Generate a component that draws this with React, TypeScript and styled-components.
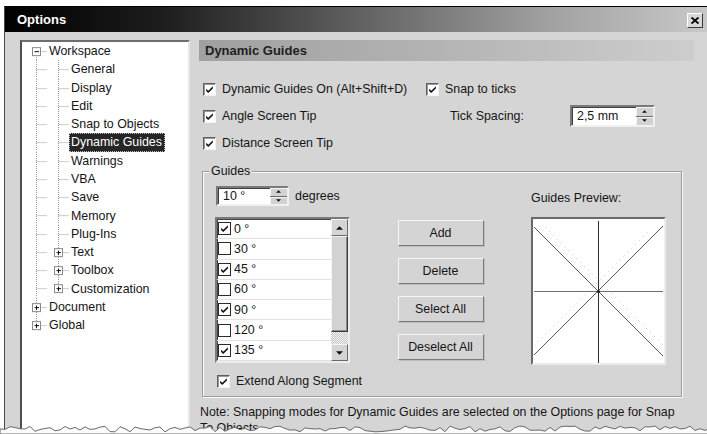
import React from "react";
import styled, { createGlobalStyle } from "styled-components";

const GlobalStyle = createGlobalStyle`
  html, body {
    margin: 0;
    padding: 0;
    background: #fff;
  }
  body {
    font-family: "Liberation Sans", Arial, sans-serif;
    font-size: 12.4px;
    color: #151515;
  }
`;

type VLine = "full" | "top" | "bottom" | "none";
type Expander = "plus" | "minus";

interface TreeNode {
  label: string;
  depth: 0 | 1;
  box?: Expander;
  first?: boolean;
  last?: boolean;
  selected?: boolean;
}

const tree: TreeNode[] = [
  { label: "Workspace", depth: 0, box: "minus", first: true },
  { label: "General", depth: 1 },
  { label: "Display", depth: 1 },
  { label: "Edit", depth: 1 },
  { label: "Snap to Objects", depth: 1 },
  { label: "Dynamic Guides", depth: 1, selected: true },
  { label: "Warnings", depth: 1 },
  { label: "VBA", depth: 1 },
  { label: "Save", depth: 1 },
  { label: "Memory", depth: 1 },
  { label: "Plug-Ins", depth: 1 },
  { label: "Text", depth: 1, box: "plus" },
  { label: "Toolbox", depth: 1, box: "plus" },
  { label: "Customization", depth: 1, box: "plus", last: true },
  { label: "Document", depth: 0, box: "plus" },
  { label: "Global", depth: 0, box: "plus", last: true },
];

const angles = [
  { deg: 0, on: true },
  { deg: 30, on: false },
  { deg: 45, on: true },
  { deg: 60, on: false },
  { deg: 90, on: true },
  { deg: 120, on: false },
  { deg: 135, on: true },
];

const ROW_H = 18.27;

const TreeGlyph = ({ v, box }: { v: VLine; box?: Expander }) => {
  const mid = ROW_H / 2;
  return (
    <svg width="22" height={ROW_H} style={{ flex: "0 0 auto" }}>
      <g stroke="#9a9a9a" strokeWidth="1" strokeDasharray="1 1">
        {v === "full" && <line x1="11.5" y1="0" x2="11.5" y2={ROW_H} />}
        {v === "top" && <line x1="11.5" y1="0" x2="11.5" y2={mid} />}
        {v === "bottom" && <line x1="11.5" y1={mid} x2="11.5" y2={ROW_H} />}
        <line x1="11.5" y1={mid + 0.5} x2="22" y2={mid + 0.5} />
      </g>
      {box && (
        <g>
          <rect x="7.5" y={mid - 3.5} width="8" height="8" fill="#fff" stroke="#8a8a8a" />
          <line x1="9.5" y1={mid + 0.5} x2="14" y2={mid + 0.5} stroke="#111" />
          {box === "plus" && (
            <line x1="11.5" y1={mid - 1.5} x2="11.5" y2={mid + 3} stroke="#111" />
          )}
        </g>
      )}
    </svg>
  );
};

const CheckMark = ({ size = 13 }: { size?: number }) => (
  <svg width={size} height={size} viewBox="0 0 13 13">
    <path d="M2.5 5.6 L5 8.1 L10.5 2.6 L10.5 5.2 L5 10.7 L2.5 8.2 Z" fill="#111" />
  </svg>
);

const Triangle = ({ dir, w = 7 }: { dir: "up" | "down"; w?: number }) => (
  <svg width={w} height={Math.ceil(w / 2)} viewBox="0 0 8 4">
    {dir === "up" ? <path d="M0 4 L4 0 L8 4 Z" fill="#111" /> : <path d="M0 0 L8 0 L4 4 Z" fill="#111" />}
  </svg>
);

const SpinBox = ({ value, width, height }: { value: string; width: number; height: number }) => (
  <SpinField style={{ width, height }}>
    <SpinText>{value}</SpinText>
    <SpinButtons>
      <SpinButton>
        <Triangle dir="up" w={5} />
      </SpinButton>
      <SpinButton>
        <Triangle dir="down" w={5} />
      </SpinButton>
    </SpinButtons>
  </SpinField>
);

const Check = ({ label, checked = true }: { label: string; checked?: boolean }) => (
  <CheckItem>
    <CheckBox>{checked && <CheckMark />}</CheckBox>
    <span>{label}</span>
  </CheckItem>
);

const GuidesPreview = () => (
  <svg width="131" height="144">
    <g stroke="#d4d4d4" strokeDasharray="1.5 4">
      <line x1="12" y1="8" x2="131" y2="127" />
      <line x1="1" y1="127" x2="118" y2="10" />
    </g>
    <line x1="1" y1="8" x2="130" y2="137" stroke="#5a5a5a" />
    <line x1="1" y1="136" x2="130" y2="7" stroke="#5a5a5a" />
    <line x1="1" y1="72.5" x2="130" y2="72.5" stroke="#6e6e6e" />
    <line x1="65.5" y1="2" x2="65.5" y2="144" stroke="#2e2e2e" />
    <circle cx="65.5" cy="72.5" r="1.6" fill="#222" />
  </svg>
);

// rough bottom edge of the clipped page
const tornPoints = (() => {
  const pts: string[] = [];
  let seed = 7;
  const rnd = () => {
    seed = (seed * 9301 + 49297) % 233280;
    return seed / 233280;
  };
  for (let x = 0; x <= 710; x += 5) {
    pts.push(`${x},${(6 + rnd() * 6).toFixed(1)}`);
  }
  return `M0,14 L${pts.join(" L")} L710,14 Z`;
})();

export default function App() {
  return (
    <Page>
      <GlobalStyle />
      <Window>
        <TitleBar>
          <Title>Options</Title>
          <CloseButton>
            <svg width="8" height="7" viewBox="0 0 8 7">
              <path d="M0.5 0.5 L7.5 6.5 M7.5 0.5 L0.5 6.5" stroke="#000" strokeWidth="1.8" />
            </svg>
          </CloseButton>
        </TitleBar>

        <Body>
          <TreePanel>
            {tree.map((n) => {
              const rootLine: VLine = n.first ? "bottom" : n.last ? "top" : "full";
              return (
                <TreeRow key={n.label}>
                  {n.depth === 0 ? (
                    <TreeGlyph v={rootLine} box={n.box} />
                  ) : (
                    <>
                      <TreeGlyph v="full" box={undefined} />
                      <TreeGlyph v={n.last ? "top" : "full"} box={n.box} />
                    </>
                  )}
                  <TreeLabel $selected={!!n.selected}>{n.label}</TreeLabel>
                </TreeRow>
              );
            })}
          </TreePanel>

          <Content>
            <Header>Dynamic Guides</Header>

            <OptionsGrid>
              <Check label="Dynamic Guides On (Alt+Shift+D)" />
              <Check label="Snap to ticks" />
              <Check label="Angle Screen Tip" />
              <TickCell>
                <TickLabel>Tick Spacing:</TickLabel>
                <SpinBox value="2,5 mm" width={85} height={22} />
              </TickCell>
              <Check label="Distance Screen Tip" />
            </OptionsGrid>

            <GroupBox>
              <GroupLabel>Guides</GroupLabel>
              <GuidesBody>
                <Column>
                  <SpinRow>
                    <SpinBox value="10 °" width={73} height={20} />
                    <span>degrees</span>
                  </SpinRow>
                  <AngleList>
                    <AngleRows>
                      {angles.map((a) => (
                        <AngleRow key={a.deg}>
                          <SmallBox>{a.on && <CheckMark size={11} />}</SmallBox>
                          <span>{a.deg} °</span>
                        </AngleRow>
                      ))}
                    </AngleRows>
                    <ScrollBar>
                      <ScrollButton>
                        <Triangle dir="up" />
                      </ScrollButton>
                      <ScrollThumb />
                      <ScrollTrack />
                      <ScrollButton>
                        <Triangle dir="down" />
                      </ScrollButton>
                    </ScrollBar>
                  </AngleList>
                  <ExtendRow>
                    <Check label="Extend Along Segment" />
                  </ExtendRow>
                </Column>

                <ButtonColumn>
                  <PushButton>Add</PushButton>
                  <PushButton>Delete</PushButton>
                  <PushButton>Select All</PushButton>
                  <PushButton>Deselect All</PushButton>
                </ButtonColumn>

                <Column>
                  <PreviewLabel>Guides Preview:</PreviewLabel>
                  <PreviewBox>
                    <GuidesPreview />
                  </PreviewBox>
                </Column>
              </GuidesBody>
            </GroupBox>

            <Note>
              Note: Snapping modes for Dynamic Guides are selected on the Options page for Snap To Objects.
            </Note>
          </Content>
        </Body>
      </Window>

      <TornEdge viewBox="0 0 707 14" width="707" height="14" preserveAspectRatio="none">
        <path d={tornPoints} fill="#fbfbfb" stroke="#6a6a6a" strokeWidth="1" />
      </TornEdge>
    </Page>
  );
}

const Page = styled.div`
  position: relative;
  width: 707px;
  height: 434px;
  overflow: hidden;
  background: #fff;
`;

const Window = styled.div`
  margin: 6px 0 0 4px;
  height: 428px;
  display: flex;
  flex-direction: column;
  background: #d5d5d5;
  border-top: 1px solid #000;
  border-left: 1px solid #4a4a4a;
`;

const TitleBar = styled.div`
  height: 25px;
  flex: 0 0 auto;
  display: flex;
  align-items: center;
  justify-content: space-between;
  padding: 0 4px 0 12px;
  background: linear-gradient(
    90deg,
    #000 0%,
    #1c1c1c 22%,
    #606060 50%,
    #a2a2a2 78%,
    #c8c8c8 100%
  );
`;

const Title = styled.span`
  color: #fff;
  font-weight: bold;
  font-size: 13px;
`;

const CloseButton = styled.div`
  box-sizing: border-box;
  width: 16px;
  height: 15px;
  margin-top: 2px;
  display: flex;
  align-items: center;
  justify-content: center;
  background: #d8d8d8;
  border: 1px solid;
  border-color: #fff #3a3a3a #3a3a3a #fff;
`;

const Body = styled.div`
  flex: 1;
  display: flex;
  gap: 9px;
  padding: 8px 0 0 15px;
`;

const TreePanel = styled.div`
  box-sizing: border-box;
  width: 170px;
  height: 400px;
  flex: 0 0 auto;
  padding: 0 0 0 3px;
  background: #fff;
  border: 2px solid;
  border-color: #6e6e6e #e6e6e6 #e6e6e6 #4e4e4e;
`;

const TreeRow = styled.div`
  height: ${ROW_H}px;
  display: flex;
  align-items: stretch;
`;

const TreeLabel = styled.span<{ $selected: boolean }>`
  display: flex;
  align-items: center;
  padding: 0 2px 0 1px;
  border: 1px dotted ${(p) => (p.$selected ? "#bdbdbd" : "transparent")};
  background: ${(p) => (p.$selected ? "#262626" : "transparent")};
  color: ${(p) => (p.$selected ? "#fff" : "#151515")};
  white-space: nowrap;
`;

const Content = styled.div`
  width: 495px;
  display: flex;
  flex-direction: column;
`;

const Header = styled.div`
  height: 21px;
  display: flex;
  align-items: center;
  padding-left: 6px;
  font-weight: bold;
  font-size: 13px;
  color: #1e1e1e;
  background: linear-gradient(90deg, #a0a0a0 0%, #b2b2b2 45%, #c6c6c6 85%, #cdcdcd 100%);
`;

const OptionsGrid = styled.div`
  display: grid;
  grid-template-columns: 223px 1fr;
  grid-auto-rows: 27px;
  align-items: center;
  margin-top: 14.5px;
  padding-left: 4px;
`;

const CheckItem = styled.label`
  display: flex;
  align-items: center;
  gap: 6px;
  white-space: nowrap;
`;

const CheckBox = styled.span`
  box-sizing: border-box;
  width: 13px;
  height: 13px;
  display: flex;
  align-items: center;
  justify-content: center;
  background: #fff;
  border: 1px solid;
  border-color: #5e5e5e #f2f2f2 #f2f2f2 #5e5e5e;
  box-shadow: inset 1px 1px 0 #9a9a9a;
`;

const TickCell = styled.div`
  display: flex;
  align-items: center;
  padding-left: 24px;
`;

const TickLabel = styled.span`
  width: 120px;
`;

const SpinField = styled.div`
  box-sizing: border-box;
  display: flex;
  align-items: stretch;
  background: #fff;
  border: 2px solid;
  border-color: #7a7a7a #f0f0f0 #f0f0f0 #7a7a7a;
  box-shadow: inset 1px 1px 0 #3e3e3e;
`;

const SpinText = styled.span`
  flex: 1;
  display: flex;
  align-items: center;
  padding-left: 5px;
`;

const SpinButtons = styled.div`
  width: 17px;
  display: flex;
  flex-direction: column;
  gap: 1px;
  background: #6a6a6a;
`;

const SpinButton = styled.div`
  flex: 1;
  display: flex;
  align-items: center;
  justify-content: center;
  background: #d2d2d2;
  box-shadow: inset 1px 1px 0 #f4f4f4;
`;

const GroupBox = styled.div`
  box-sizing: border-box;
  width: 480px;
  margin: 14.5px 0 0 3px;
  padding: 0 14px 7px 12px;
  border: 1px solid #9c9c9c;
  box-shadow: inset 1px 1px 0 #fafafa, 1px 1px 0 #fafafa;
`;

const GroupLabel = styled.div`
  width: fit-content;
  margin: -8px 0 0 -6px;
  padding: 0 2px;
  line-height: 15px;
  background: #d5d5d5;
`;

const GuidesBody = styled.div`
  display: grid;
  grid-template-columns: 135px 86px 135px;
  column-gap: 47.5px;
  margin-top: 7px;
`;

const Column = styled.div`
  display: flex;
  flex-direction: column;
`;

const SpinRow = styled.div`
  display: flex;
  align-items: center;
  gap: 6px;
  margin-left: 1px;
`;

const AngleList = styled.div`
  box-sizing: border-box;
  height: 146px;
  margin-top: 11px;
  display: flex;
  background: #fff;
  border: 2px solid;
  border-color: #7a7a7a #ededed #ededed #7a7a7a;
  box-shadow: inset 1px 1px 0 #444;
`;

const AngleRows = styled.div`
  flex: 1;
  display: flex;
  flex-direction: column;
`;

const AngleRow = styled.div`
  box-sizing: border-box;
  height: 20.3px;
  display: flex;
  align-items: center;
  gap: 3px;
  padding-left: 1px;
  border-bottom: 1px solid #e2e2e2;
`;

const SmallBox = styled.span`
  box-sizing: border-box;
  width: 13px;
  height: 13px;
  display: flex;
  align-items: center;
  justify-content: center;
  background: #fff;
  border: 1.5px solid #2a2a2a;
`;

const ScrollBar = styled.div`
  width: 17px;
  display: flex;
  flex-direction: column;
`;

const ScrollButton = styled.div`
  box-sizing: border-box;
  height: 17px;
  display: flex;
  align-items: center;
  justify-content: center;
  background: #d4d4d4;
  border: 1px solid;
  border-color: #f4f4f4 #6a6a6a #6a6a6a #f4f4f4;
`;

const ScrollThumb = styled.div`
  box-sizing: border-box;
  height: 96px;
  background: #d2d2d2;
  border: 1px solid;
  border-color: #f4f4f4 #3c3c3c #3c3c3c #f4f4f4;
  box-shadow: inset -1px -1px 0 #8a8a8a;
`;

const ScrollTrack = styled.div`
  flex: 1;
  background: repeating-conic-gradient(#f4f4f4 0 25%, #c6c6c6 0 50%) 0 0 / 2px 2px;
`;

const ExtendRow = styled.div`
  height: 16px;
  display: flex;
  align-items: center;
  margin: 10px 0 0 2px;
`;

const ButtonColumn = styled.div`
  display: flex;
  flex-direction: column;
  gap: 12px;
  padding-top: 34px;
`;

const PushButton = styled.div`
  box-sizing: border-box;
  height: 26px;
  display: flex;
  align-items: center;
  justify-content: center;
  background: #d4d4d4;
  border: 1px solid;
  border-color: #f6f6f6 #7a7a7a #7a7a7a #f6f6f6;
  box-shadow: 1px 1px 0 #bdbdbd;
`;

const PreviewLabel = styled.div`
  line-height: 16px;
  margin-top: 4px;
`;

const PreviewBox = styled.div`
  box-sizing: border-box;
  width: 135px;
  height: 148px;
  margin-top: 11px;
  display: flex;
  background: #fff;
  border: 2px solid;
  border-color: #6a6a6a #ececec #ececec #6a6a6a;
`;

const Note = styled.div`
  max-width: 478px;
  margin-top: 7px;
  padding-left: 1px;
  line-height: 16px;
`;

const TornEdge = styled.svg`
  position: absolute;
  left: 0;
  bottom: 0;
`;
